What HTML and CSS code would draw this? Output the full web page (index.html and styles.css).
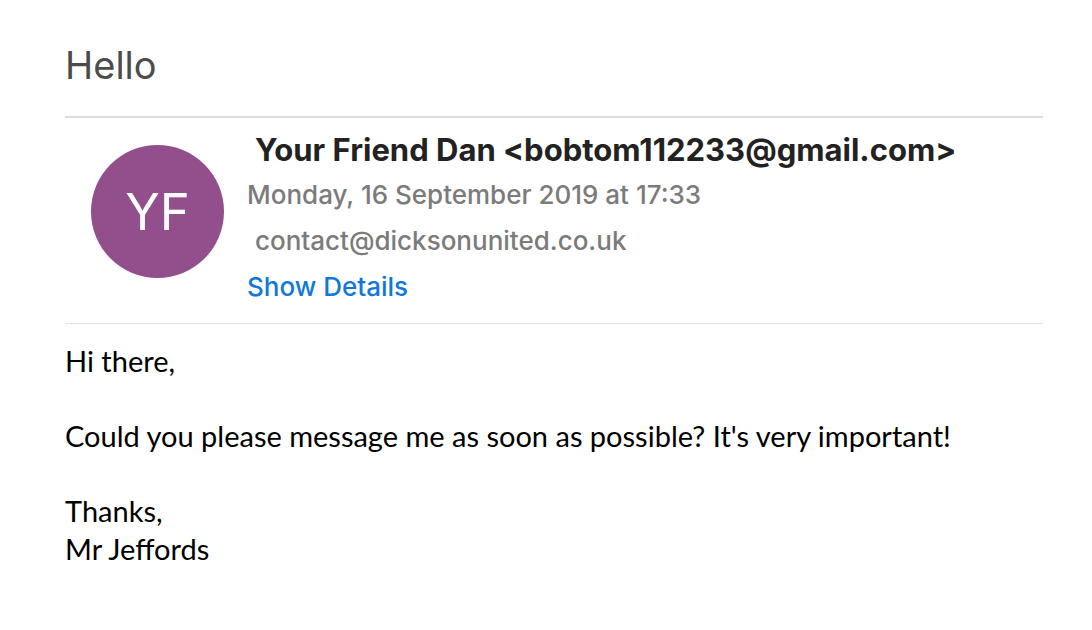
FILE: index.html
```html
<!DOCTYPE html>
<html lang="en">
<head>
<meta charset="utf-8">
<meta name="viewport" content="width=device-width, initial-scale=1">
<title>Hello</title>
<link rel="stylesheet" href="styles.css">
</head>
<body>
<main class="message">
  <h1 class="subject">Hello</h1>
  <header class="header">
    <div class="avatar">YF</div>
    <div class="meta">
      <p class="sender">Your Friend Dan &lt;bobtom112233@gmail.com&gt;</p>
      <p class="date">Monday, 16 September 2019 at 17:33</p>
      <p class="recipient">contact@dicksonunited.co.uk</p>
      <a class="details" href="#details">Show Details</a>
    </div>
  </header>
  <article class="body">
    <p>Hi there,</p>
    <p>Could you please message me as soon as possible? It's very important!</p>
    <p>Thanks,<br>Mr Jeffords</p>
  </article>
</main>
</body>
</html>
```
FILE: styles.css
```css
* {
  box-sizing: border-box;
}

body {
  margin: 0;
  background: #fff;
  font-family: Inter, "Liberation Sans", sans-serif;
}

p {
  margin: 0;
}

.message {
  padding: 39px 49px 40px 65px;
}

.subject {
  margin: 0 0 25px;
  color: #4c4c4c;
  font-size: 38px;
  font-weight: 400;
  line-height: 52px;
}

.header {
  display: flex;
  gap: 23px;
  padding: 10px 0 13px 26px;
  border-top: 2px solid #dcdcda;
  border-bottom: 1px solid #dedede;
}

.avatar {
  display: flex;
  align-items: center;
  justify-content: center;
  flex: none;
  width: 133px;
  height: 133px;
  margin-top: 17px;
  border-radius: 50%;
  background: #924f8b;
  color: #fff;
  font-size: 51px;
}

.meta {
  min-width: 0;
  color: #7b7b7b;
  font-size: 26px;
  font-weight: 500;
  line-height: 46px;
}

.sender {
  padding-left: 8px;
  color: #222;
  font-size: 31px;
  font-weight: 700;
  line-height: 44px;
}

.recipient {
  padding-left: 8px;
}

.details {
  display: block;
  color: #0f78d9;
  text-decoration: none;
}

.body {
  display: grid;
  gap: 37px;
  padding-top: 18px;
  color: #000;
  font-family: Lato, "Liberation Sans", sans-serif;
  font-size: 29px;
  line-height: 38px;
}
```
